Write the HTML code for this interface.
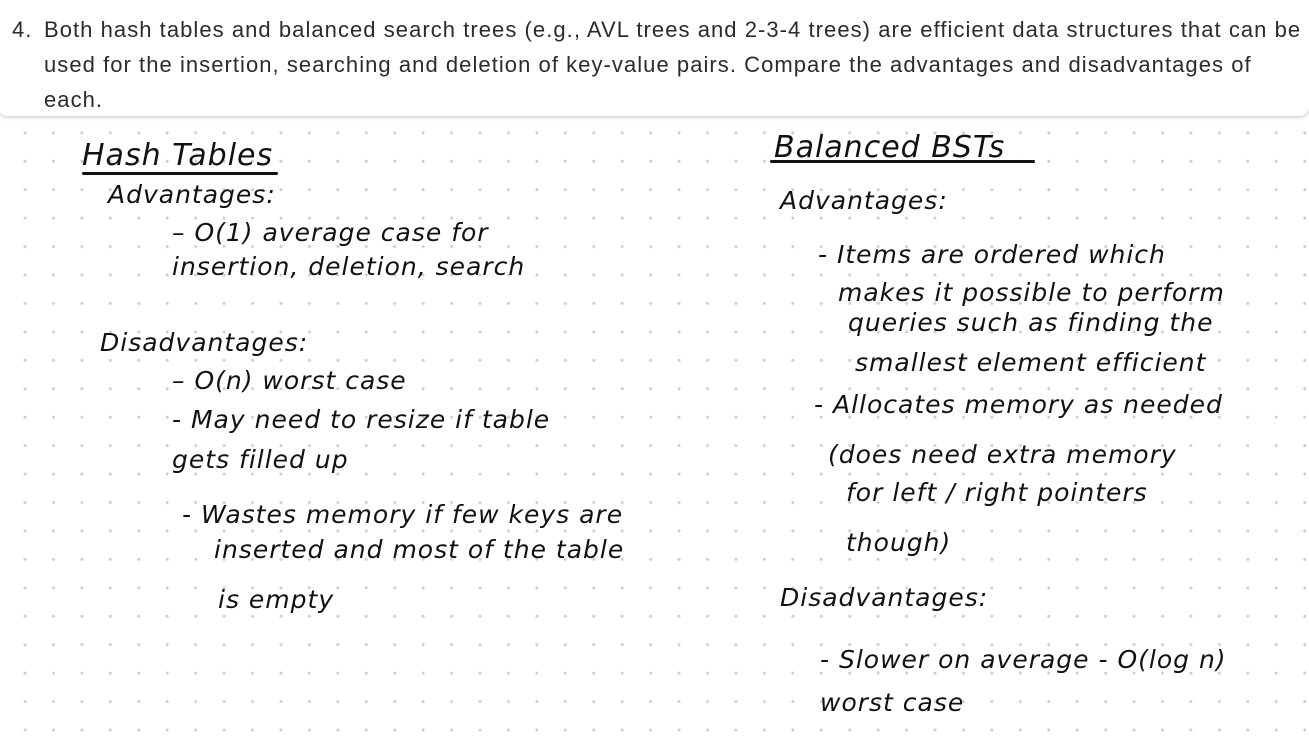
<!DOCTYPE html>
<html><head><meta charset="utf-8"><style>
html,body{margin:0;padding:0;width:1309px;height:739px;overflow:hidden;background:#fff;}
#grid{position:absolute;left:0;top:118px;width:1309px;height:621px;
background-image:radial-gradient(circle,#cfcfcf 1.3px,transparent 1.8px);
background-size:28.45px 28.45px;background-position:10.8px 0.6px;}
#q{position:absolute;left:-2px;top:-6px;width:1311px;height:122px;background:#fff;border-radius:0 0 10px 10px;
box-shadow:0 1px 4px rgba(0,0,0,0.25);}
.t{position:absolute;font-family:"Liberation Sans",sans-serif;font-size:22px;letter-spacing:1.05px;color:#2b2b2b;line-height:35px;white-space:nowrap;}
.h{position:absolute;font-family:"DejaVu Sans",sans-serif;font-style:italic;color:#111;white-space:nowrap;font-size:25px;letter-spacing:1px;}
.u{position:absolute;height:3px;background:#111;border-radius:2px;}
</style></head><body>
<div id="grid"></div>
<div id="q"></div>
<div class="t" style="left:12px;top:12px">4.</div>
<div class="t" style="left:44px;top:12px">Both hash tables and balanced search trees (e.g., AVL trees and 2-3-4 trees) are efficient data structures that can be<br>used for the insertion, searching and deletion of key-value pairs. Compare the advantages and disadvantages of<br>each.</div>

<div class="h" style="left:82px;top:138px;font-size:30px">Hash Tables</div>
<div class="u" style="left:82px;top:172px;width:196px"></div>
<div class="h" style="left:108px;top:180px">Advantages:</div>
<div class="h" style="left:172px;top:218px">– O(1)  average case for</div>
<div class="h" style="left:172px;top:252px">insertion, deletion, search</div>
<div class="h" style="left:100px;top:328px">Disadvantages:</div>
<div class="h" style="left:172px;top:366px">– O(n)  worst case</div>
<div class="h" style="left:172px;top:405px">- May need to resize if table</div>
<div class="h" style="left:172px;top:445px">gets filled up</div>
<div class="h" style="left:182px;top:500px">- Wastes memory if few keys are</div>
<div class="h" style="left:214px;top:535px">inserted and most of the table</div>
<div class="h" style="left:218px;top:585px">is empty</div>

<div class="h" style="left:774px;top:130px;font-size:30px">Balanced BSTs</div>
<div class="u" style="left:770px;top:160px;width:265px"></div>
<div class="h" style="left:780px;top:186px">Advantages:</div>
<div class="h" style="left:818px;top:240px">- Items are ordered which</div>
<div class="h" style="left:838px;top:278px">makes it possible to perform</div>
<div class="h" style="left:848px;top:308px">queries such as finding the</div>
<div class="h" style="left:855px;top:348px">smallest element efficient</div>
<div class="h" style="left:814px;top:390px">- Allocates memory as needed</div>
<div class="h" style="left:828px;top:440px">(does need extra memory</div>
<div class="h" style="left:846px;top:478px">for left / right pointers</div>
<div class="h" style="left:846px;top:528px">though)</div>
<div class="h" style="left:780px;top:583px">Disadvantages:</div>
<div class="h" style="left:820px;top:645px">- Slower on average - O(log n)</div>
<div class="h" style="left:820px;top:688px">worst case</div>
</body></html>
